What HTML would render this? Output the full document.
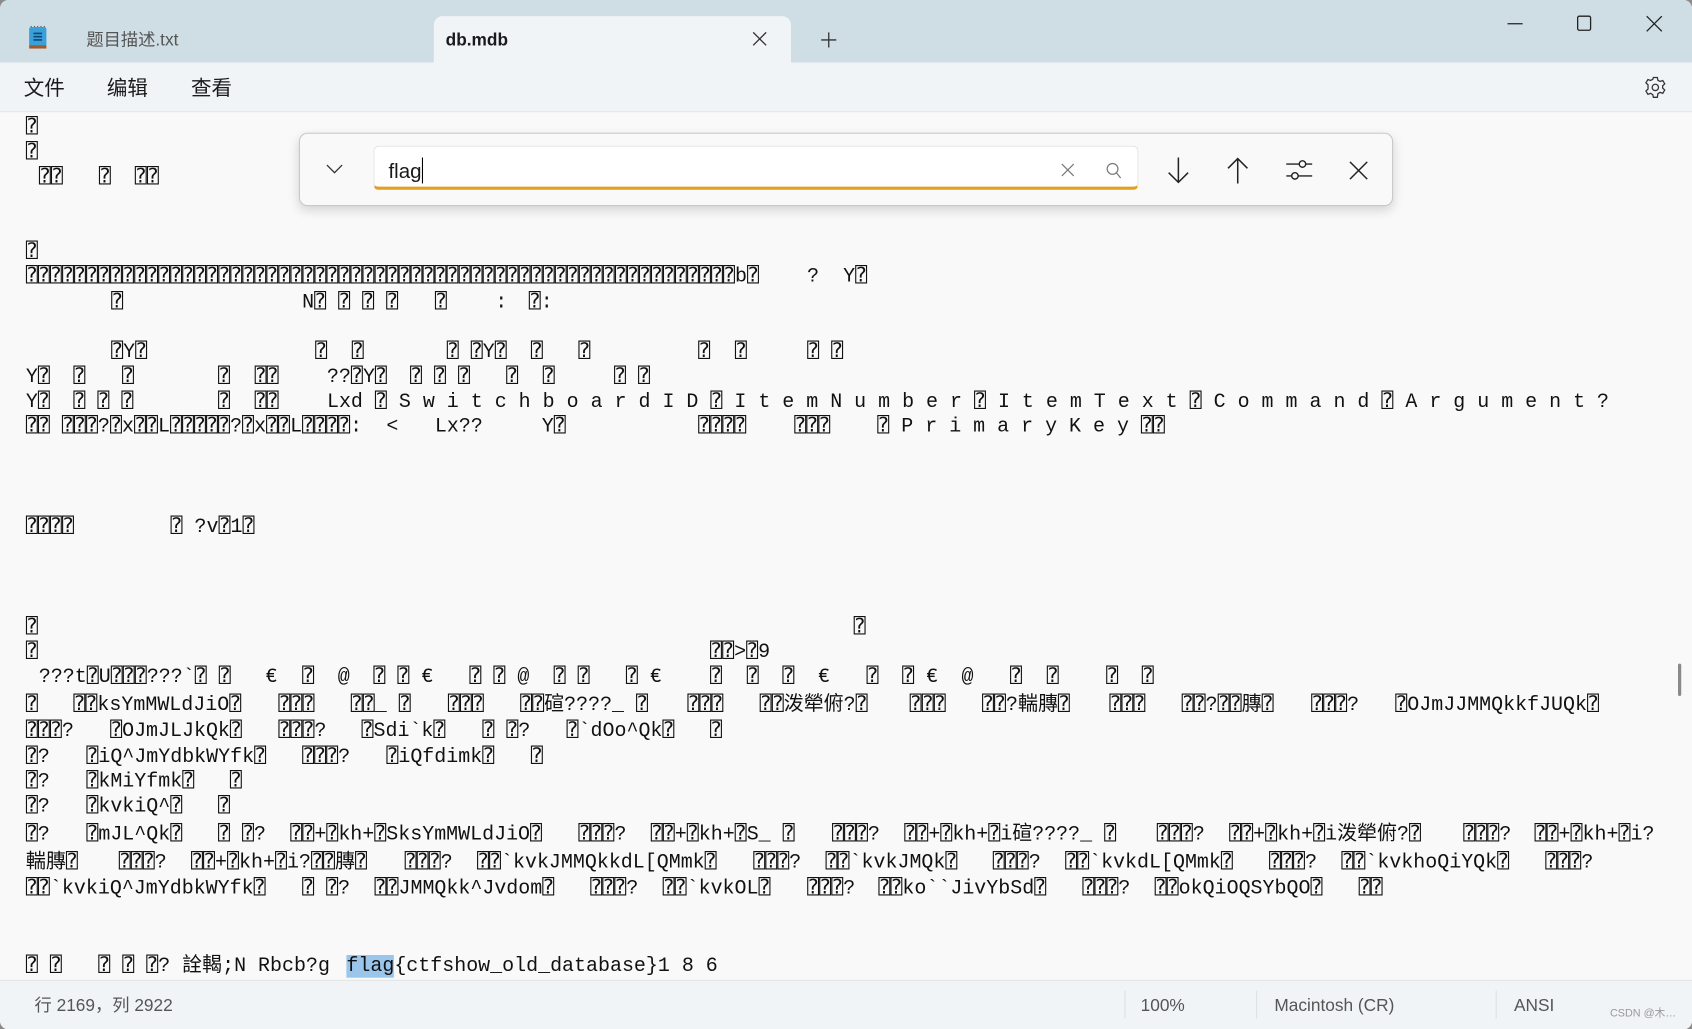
<!DOCTYPE html>
<html><head><meta charset="utf-8">
<style>
html,body{margin:0;padding:0;width:1692px;height:1029px;overflow:hidden;background:#8a8a8a;}
#w{position:absolute;left:0;top:0;width:1568px;height:954px;transform:scale(1.0791);transform-origin:0 0;background:#f9f9f9;font-family:"Liberation Sans","Noto Sans CJK SC",sans-serif;border-radius:8px;overflow:hidden;}
.tb{position:absolute;left:0;top:0;width:1568px;height:58px;background:#cfdde4;}
.tab{position:absolute;left:402px;top:15px;width:331px;height:43px;background:#f0f4f7;border-radius:8px 8px 0 0;}
.mb{position:absolute;left:0;top:58px;width:1568px;height:45px;background:#f0f4f7;border-bottom:1px solid #e2e6e9;}
.sb{position:absolute;left:0;top:908px;width:1568px;height:46px;background:#f0f4f7;border-top:1px solid #e2e6e9;}
.t{position:absolute;white-space:nowrap;line-height:20px;}
.m{position:absolute;white-space:pre;font-family:"Liberation Mono","DejaVu Sans Mono","Noto Sans CJK SC",monospace;font-size:18.5px;line-height:22px;color:#111;margin-top:2px;}
.find{position:absolute;left:277px;top:123px;width:1012px;height:66px;background:#f9f9f9;border:1px solid #c8c8c8;border-radius:8px;box-shadow:0 4px 10px rgba(0,0,0,.15);}
.inp{position:absolute;left:68px;top:11px;width:709px;height:41px;background:#fff;border:1px solid #e6e6e6;border-bottom:3px solid #e0a020;border-radius:5px;box-sizing:border-box;}
.sep{position:absolute;top:918px;width:1px;height:26px;background:#dde1e4;}
</style></head><body>
<div id="w">
<div class="tb"></div>
<svg style="position:absolute;left:26px;top:24px" width="18" height="22" viewBox="0 0 18 22"><rect x="1" y="1" width="16" height="18" rx="2" fill="#3aa0d8"/><rect x="1" y="18" width="16" height="3" fill="#a05a2a"/><path d="M5 7h8M5 10h8M5 13h8" stroke="#12457a" stroke-width="1.5"/><path d="M3 1v-1M6 1v-1M9 1v-1M12 1v-1M15 1v-1" stroke="#555"/></svg>
<div class="t" style="left:80px;top:28px;font-size:16px;color:#555">题目描述.txt</div>
<div class="tab"></div>
<div class="t" style="left:413px;top:28px;font-size:16px;color:#1a1a1a;font-weight:bold">db.mdb</div>
<svg style="position:absolute;left:697px;top:29px" width="14" height="14"><path d="M1 1L13 13M13 1L1 13" stroke="#333" stroke-width="1.2"/></svg>
<svg style="position:absolute;left:760px;top:29px" width="16" height="16"><path d="M8 1V15M1 8H15" stroke="#333" stroke-width="1.2"/></svg>
<svg style="position:absolute;left:1396px;top:15px" width="16" height="16"><path d="M1 7H15" stroke="#222" stroke-width="1.2"/></svg>
<svg style="position:absolute;left:1460px;top:14px" width="16" height="16"><rect x="2" y="1" width="12" height="13" rx="1.5" fill="none" stroke="#222" stroke-width="1.2"/></svg>
<svg style="position:absolute;left:1525px;top:14px" width="16" height="16"><path d="M1 1L15 15M15 1L1 15" stroke="#222" stroke-width="1.2"/></svg>
<div class="mb"></div>
<div class="t" style="left:22px;top:72px;font-size:19px;line-height:22px;color:#1a1a1a">文件</div>
<div class="t" style="left:99px;top:72px;font-size:19px;line-height:22px;color:#1a1a1a">编辑</div>
<div class="t" style="left:177px;top:72px;font-size:19px;line-height:22px;color:#1a1a1a">查看</div>
<svg style="position:absolute;left:1523px;top:70px" width="22" height="22" viewBox="0 0 24 24"><path d="M10 2h4l.6 2.8 2.2 1.2 2.7-1 2 3.4-2.1 1.9v2.4l2.1 1.9-2 3.4-2.7-1-2.2 1.3L14 22h-4l-.6-2.7-2.2-1.3-2.7 1-2-3.4 2.1-1.9V9.3L2.5 7.4l2-3.4 2.7 1 2.2-1.2z" fill="none" stroke="#333" stroke-width="1.3"/><circle cx="12" cy="12" r="3.2" fill="none" stroke="#333" stroke-width="1.3"/></svg>

<div class="m" style="left:24px;top:106px">⍰</div>
<div class="m" style="left:24px;top:129px">⍰</div>
<div class="m" style="left:36px;top:152px">⍰⍰   ⍰  ⍰⍰</div>
<div class="m" style="left:24px;top:221px">⍰</div>
<div class="m" style="left:24px;top:244px">⍰⍰⍰⍰⍰⍰⍰⍰⍰⍰⍰⍰⍰⍰⍰⍰⍰⍰⍰⍰⍰⍰⍰⍰⍰⍰⍰⍰⍰⍰⍰⍰⍰⍰⍰⍰⍰⍰⍰⍰⍰⍰⍰⍰⍰⍰⍰⍰⍰⍰⍰⍰⍰⍰⍰⍰⍰⍰⍰b⍰</div>
<div class="m" style="left:748px;top:244px">?  Y⍰</div>
<div class="m" style="left:103px;top:268px">⍰</div>
<div class="m" style="left:280px;top:268px">N⍰ ⍰ ⍰ ⍰</div>
<div class="m" style="left:403px;top:268px">⍰</div>
<div class="m" style="left:459px;top:268px">:</div>
<div class="m" style="left:490px;top:268px">⍰:</div>
<div class="m" style="left:103px;top:314px">⍰Y⍰</div>
<div class="m" style="left:292px;top:314px">⍰</div>
<div class="m" style="left:326px;top:314px">⍰</div>
<div class="m" style="left:414px;top:314px">⍰ ⍰Y⍰</div>
<div class="m" style="left:492px;top:314px">⍰</div>
<div class="m" style="left:536px;top:314px">⍰</div>
<div class="m" style="left:647px;top:314px">⍰</div>
<div class="m" style="left:681px;top:314px">⍰</div>
<div class="m" style="left:748px;top:314px">⍰ ⍰</div>
<div class="m" style="left:24px;top:337px">Y⍰</div>
<div class="m" style="left:68px;top:337px">⍰</div>
<div class="m" style="left:113px;top:337px">⍰</div>
<div class="m" style="left:202px;top:337px">⍰</div>
<div class="m" style="left:236px;top:337px">⍰⍰</div>
<div class="m" style="left:303px;top:337px">??⍰Y⍰</div>
<div class="m" style="left:380px;top:337px">⍰ ⍰ ⍰</div>
<div class="m" style="left:469px;top:337px">⍰</div>
<div class="m" style="left:503px;top:337px">⍰</div>
<div class="m" style="left:569px;top:337px">⍰ ⍰</div>
<div class="m" style="left:24px;top:360px">Y⍰</div>
<div class="m" style="left:68px;top:360px">⍰ ⍰ ⍰</div>
<div class="m" style="left:202px;top:360px">⍰</div>
<div class="m" style="left:236px;top:360px">⍰⍰</div>
<div class="m" style="left:303px;top:360px">Lxd ⍰ S w i t c h b o a r d I D ⍰ I t e m N u m b e r ⍰ I t e m T e x t ⍰ C o m m a n d ⍰ A r g u m e n t ?</div>
<div class="m" style="left:24px;top:383px">⍰⍰ ⍰⍰⍰?⍰x⍰⍰L⍰⍰⍰⍰⍰?⍰x⍰⍰L⍰⍰⍰⍰:</div>
<div class="m" style="left:358px;top:383px">&lt;</div>
<div class="m" style="left:403px;top:383px">Lx??</div>
<div class="m" style="left:502px;top:383px">Y⍰</div>
<div class="m" style="left:647px;top:383px">⍰⍰⍰⍰</div>
<div class="m" style="left:736px;top:383px">⍰⍰⍰</div>
<div class="m" style="left:813px;top:383px">⍰ P r i m a r y K e y ⍰⍰</div>
<div class="m" style="left:24px;top:476px">⍰⍰⍰⍰</div>
<div class="m" style="left:158px;top:476px">⍰ ?v⍰1⍰</div>
<div class="m" style="left:24px;top:569px">⍰</div>
<div class="m" style="left:791px;top:569px">⍰</div>
<div class="m" style="left:24px;top:592px">⍰</div>
<div class="m" style="left:658px;top:592px">⍰⍰&gt;⍰9</div>
<div class="m" style="left:36px;top:615px">???t⍰U⍰⍰⍰???`⍰ ⍰</div>
<div class="m" style="left:246px;top:615px">€</div>
<div class="m" style="left:280px;top:615px">⍰</div>
<div class="m" style="left:313px;top:615px">@</div>
<div class="m" style="left:346px;top:615px">⍰ ⍰ €</div>
<div class="m" style="left:435px;top:615px">⍰ ⍰ @</div>
<div class="m" style="left:513px;top:615px">⍰ ⍰</div>
<div class="m" style="left:580px;top:615px">⍰ €</div>
<div class="m" style="left:658px;top:615px">⍰</div>
<div class="m" style="left:692px;top:615px">⍰</div>
<div class="m" style="left:725px;top:615px">⍰</div>
<div class="m" style="left:758px;top:615px">€</div>
<div class="m" style="left:803px;top:615px">⍰</div>
<div class="m" style="left:836px;top:615px">⍰ €</div>
<div class="m" style="left:891px;top:615px">@</div>
<div class="m" style="left:936px;top:615px">⍰</div>
<div class="m" style="left:970px;top:615px">⍰</div>
<div class="m" style="left:1025px;top:615px">⍰</div>
<div class="m" style="left:1058px;top:615px">⍰</div>
<div class="m" style="left:24px;top:641px">⍰</div>
<div class="m" style="left:68px;top:641px">⍰⍰ksYmMWLdJiO⍰</div>
<div class="m" style="left:258px;top:641px">⍰⍰⍰</div>
<div class="m" style="left:325px;top:641px">⍰⍰_ ⍰</div>
<div class="m" style="left:415px;top:641px">⍰⍰⍰</div>
<div class="m" style="left:482px;top:641px">⍰⍰碹????_ ⍰</div>
<div class="m" style="left:637px;top:641px">⍰⍰⍰</div>
<div class="m" style="left:704px;top:641px">⍰⍰泼犖俯?⍰</div>
<div class="m" style="left:843px;top:641px">⍰⍰⍰</div>
<div class="m" style="left:910px;top:641px">⍰⍰?輲膞⍰</div>
<div class="m" style="left:1028px;top:641px">⍰⍰⍰</div>
<div class="m" style="left:1095px;top:641px">⍰⍰?⍰⍰膞⍰</div>
<div class="m" style="left:1215px;top:641px">⍰⍰⍰?</div>
<div class="m" style="left:1293px;top:641px">⍰OJmJJMMQkkfJUQk⍰</div>
<div class="m" style="left:24px;top:665px">⍰⍰⍰?</div>
<div class="m" style="left:102px;top:665px">⍰OJmJLJkQk⍰</div>
<div class="m" style="left:258px;top:665px">⍰⍰⍰?</div>
<div class="m" style="left:335px;top:665px">⍰Sdi`k⍰</div>
<div class="m" style="left:447px;top:665px">⍰ ⍰?</div>
<div class="m" style="left:525px;top:665px">⍰`dOo^Qk⍰</div>
<div class="m" style="left:658px;top:665px">⍰</div>
<div class="m" style="left:24px;top:689px">⍰?</div>
<div class="m" style="left:80px;top:689px">⍰iQ^JmYdbkWYfk⍰</div>
<div class="m" style="left:280px;top:689px">⍰⍰⍰?</div>
<div class="m" style="left:358px;top:689px">⍰iQfdimk⍰</div>
<div class="m" style="left:492px;top:689px">⍰</div>
<div class="m" style="left:24px;top:712px">⍰?</div>
<div class="m" style="left:80px;top:712px">⍰kMiYfmk⍰</div>
<div class="m" style="left:213px;top:712px">⍰</div>
<div class="m" style="left:24px;top:735px">⍰?</div>
<div class="m" style="left:80px;top:735px">⍰kvkiQ^⍰</div>
<div class="m" style="left:202px;top:735px">⍰</div>
<div class="m" style="left:24px;top:761px">⍰?</div>
<div class="m" style="left:80px;top:761px">⍰mJL^Qk⍰</div>
<div class="m" style="left:202px;top:761px">⍰ ⍰?</div>
<div class="m" style="left:269px;top:761px">⍰⍰+⍰kh+⍰SksYmMWLdJiO⍰</div>
<div class="m" style="left:536px;top:761px">⍰⍰⍰?</div>
<div class="m" style="left:603px;top:761px">⍰⍰+⍰kh+⍰S_ ⍰</div>
<div class="m" style="left:771px;top:761px">⍰⍰⍰?</div>
<div class="m" style="left:838px;top:761px">⍰⍰+⍰kh+⍰i碹????_ ⍰</div>
<div class="m" style="left:1072px;top:761px">⍰⍰⍰?</div>
<div class="m" style="left:1139px;top:761px">⍰⍰+⍰kh+⍰i泼犖俯?⍰</div>
<div class="m" style="left:1356px;top:761px">⍰⍰⍰?</div>
<div class="m" style="left:1422px;top:761px">⍰⍰+⍰kh+⍰i?</div>
<div class="m" style="left:24px;top:787px">輲膞⍰</div>
<div class="m" style="left:110px;top:787px">⍰⍰⍰?</div>
<div class="m" style="left:177px;top:787px">⍰⍰+⍰kh+⍰i?⍰⍰膞⍰</div>
<div class="m" style="left:375px;top:787px">⍰⍰⍰?</div>
<div class="m" style="left:442px;top:787px">⍰⍰`kvkJMMQkkdL[QMmk⍰</div>
<div class="m" style="left:698px;top:787px">⍰⍰⍰?</div>
<div class="m" style="left:765px;top:787px">⍰⍰`kvkJMQk⍰</div>
<div class="m" style="left:920px;top:787px">⍰⍰⍰?</div>
<div class="m" style="left:987px;top:787px">⍰⍰`kvkdL[QMmk⍰</div>
<div class="m" style="left:1176px;top:787px">⍰⍰⍰?</div>
<div class="m" style="left:1243px;top:787px">⍰⍰`kvkhoQiYQk⍰</div>
<div class="m" style="left:1432px;top:787px">⍰⍰⍰?</div>
<div class="m" style="left:24px;top:811px">⍰⍰`kvkiQ^JmYdbkWYfk⍰</div>
<div class="m" style="left:280px;top:811px">⍰ ⍰?</div>
<div class="m" style="left:347px;top:811px">⍰⍰JMMQkk^Jvdom⍰</div>
<div class="m" style="left:547px;top:811px">⍰⍰⍰?</div>
<div class="m" style="left:614px;top:811px">⍰⍰`kvkOL⍰</div>
<div class="m" style="left:748px;top:811px">⍰⍰⍰?</div>
<div class="m" style="left:814px;top:811px">⍰⍰ko``JivYbSd⍰</div>
<div class="m" style="left:1003px;top:811px">⍰⍰⍰?</div>
<div class="m" style="left:1070px;top:811px">⍰⍰okQiOQSYbQO⍰</div>
<div class="m" style="left:1259px;top:811px">⍰⍰</div>
<div class="m" style="left:24px;top:883px">⍰ ⍰</div>
<div class="m" style="left:91px;top:883px">⍰ ⍰ ⍰? 詮輵;N Rbcb?g</div>
<div class="m" style="left:321px;top:883px"><span style="background:#9ac6ec">flag</span>{ctfshow_old_database}1 8 6</div>
<div style="position:absolute;left:1555px;top:615px;width:3px;height:30px;background:#8a8a8a;border-radius:2px"></div>

<div class="find">
<svg style="position:absolute;left:24px;top:28px" width="16" height="10"><path d="M1 1L8 8L15 1" fill="none" stroke="#333" stroke-width="1.2"/></svg>
<div class="inp"></div>
<div class="t" style="left:82px;top:22px;font-size:19px;line-height:24px;color:#1a1a1a">flag<span style="display:inline-block;width:1.5px;height:24px;background:#000;vertical-align:-5px"></span></div>
<svg style="position:absolute;left:705px;top:27px" width="13" height="13"><path d="M1 1L12 12M12 1L1 12" stroke="#777" stroke-width="1.1"/></svg>
<svg style="position:absolute;left:746px;top:26px" width="16" height="16"><circle cx="7" cy="6.5" r="5" fill="none" stroke="#777" stroke-width="1.1"/><path d="M10.5 10L14.5 15" stroke="#777" stroke-width="1.1"/></svg>
<svg style="position:absolute;left:803px;top:21px" width="22" height="26"><path d="M11 1V24M2 15L11 24L20 15" fill="none" stroke="#222" stroke-width="1.4"/></svg>
<svg style="position:absolute;left:858px;top:21px" width="22" height="26"><path d="M11 25V2M2 11L11 2L20 11" fill="none" stroke="#222" stroke-width="1.4"/></svg>
<svg style="position:absolute;left:913px;top:22px" width="26" height="24"><path d="M1 6H25M1 17H25" stroke="#222" stroke-width="1.3"/><circle cx="16" cy="6" r="3" fill="#f9f9f9" stroke="#222" stroke-width="1.3"/><circle cx="9" cy="17" r="3" fill="#f9f9f9" stroke="#222" stroke-width="1.3"/></svg>
<svg style="position:absolute;left:972px;top:25px" width="18" height="18"><path d="M1 1L17 17M17 1L1 17" stroke="#222" stroke-width="1.4"/></svg>
</div>

<div class="sb"></div>
<div class="t" style="left:32px;top:923px;font-size:16px;color:#555">行 2169，列 2922</div>
<div class="sep" style="left:1042px"></div>
<div class="t" style="left:1057px;top:923px;font-size:16px;color:#555">100%</div>
<div class="sep" style="left:1164px"></div>
<div class="t" style="left:1181px;top:923px;font-size:16px;color:#555">Macintosh (CR)</div>
<div class="sep" style="left:1386px"></div>
<div class="t" style="left:1403px;top:923px;font-size:16px;color:#555">ANSI</div>
<div class="t" style="left:1492px;top:933px;font-size:10px;line-height:14px;color:#999">CSDN @木…</div>
</div>
</body></html>
